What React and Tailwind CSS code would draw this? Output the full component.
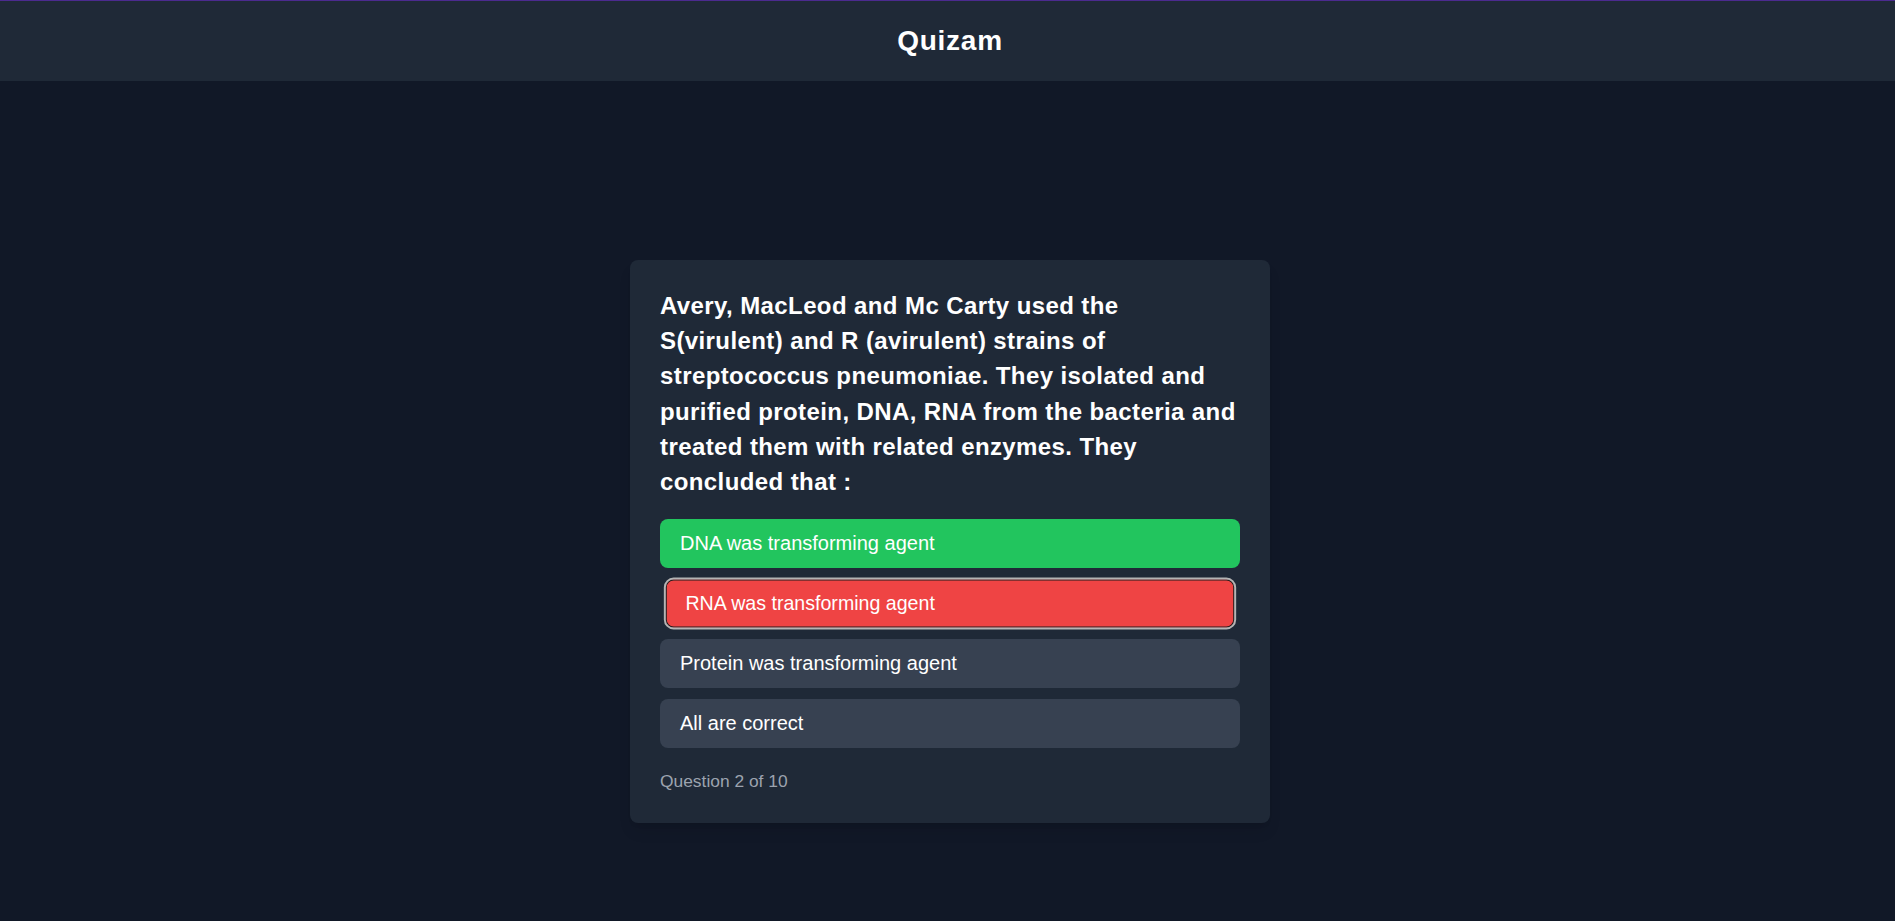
import React from "react";

const options = [
  { text: "DNA was transforming agent", state: "correct" },
  { text: "RNA was transforming agent", state: "wrong" },
  { text: "Protein was transforming agent", state: "idle" },
  { text: "All are correct", state: "idle" },
];

function Option({ text, state }) {
  if (state === "correct") {
    return (
      <button className="w-full text-left rounded-lg bg-[#22c55e] px-5 py-[10px] text-[20px] leading-[29px] text-white">
        {text}
      </button>
    );
  }
  if (state === "wrong") {
    return (
      <button className="w-full text-left rounded-lg bg-[#ef4444] px-5 py-[10px] text-[20px] leading-[29px] text-white scale-[0.98] shadow-[inset_0_0_0_1px_#1c1c1c] outline-2 outline-[#b4b4b4]">
        {text}
      </button>
    );
  }
  return (
    <button className="w-full text-left rounded-lg bg-[#374151] px-5 py-[10px] text-[20px] leading-[29px] text-white">
      {text}
    </button>
  );
}

export default function App() {
  return (
    <div className="min-h-screen bg-[#111827] font-['Liberation_Sans',Arial,sans-serif]">
      <header className="h-[81px] border-t border-[#4b2a8f] bg-[#1f2937] flex items-center justify-center pl-[5px]">
        <h1 className="text-[28px] font-bold text-white tracking-[0.75px]">Quizam</h1>
      </header>
      <main className="min-h-screen flex items-center justify-center pl-[5px]">
        <div className="w-[640px] rounded-lg bg-[#1f2937] px-[30px] pt-[28px] pb-[30px] shadow-lg">
          <h2 className="text-[24px] leading-[35.3px] font-bold text-white tracking-[0.4px] mb-[20px]">
            Avery, MacLeod and Mc Carty used the S(virulent) and R (avirulent) strains of streptococcus pneumoniae. They isolated and purified protein, DNA, RNA from the bacteria and treated them with related enzymes. They concluded that :
          </h2>
          <div className="flex flex-col gap-[11px]">
            {options.map((o) => (
              <Option key={o.text} text={o.text} state={o.state} />
            ))}
          </div>
          <p className="mt-[21px] text-[17.4px] leading-6 text-[#9ca3af]">Question 2 of 10</p>
        </div>
      </main>
    </div>
  );
}
